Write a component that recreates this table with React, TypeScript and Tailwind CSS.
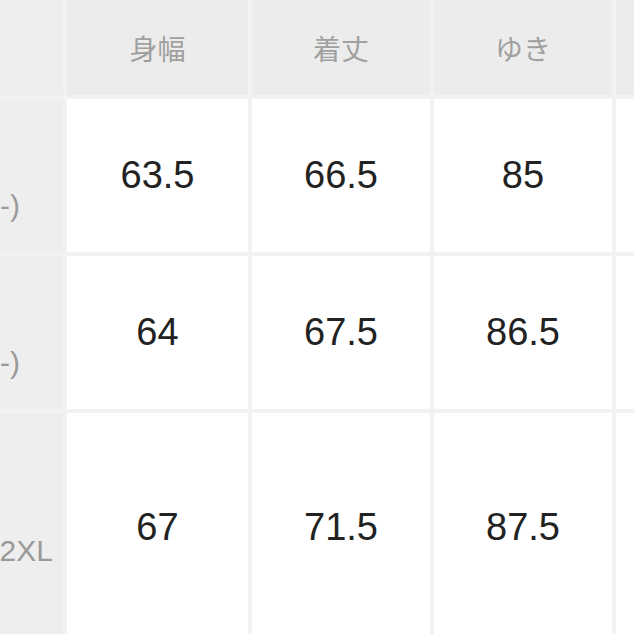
import React from "react";

const headers = ["身幅", "着丈", "ゆき", ""];

interface SizeRow {
    label: string;
    height: string;
    shift: string;
    pad: string;
    values: string[];
}

const rows: SizeRow[] = [
    { label: "-)", height: "h-[153px]", shift: "pt-[60px]", pad: "pr-[43px]", values: ["63.5", "66.5", "85", ""] },
    { label: "-)", height: "h-[153px]", shift: "pt-[60px]", pad: "pr-[43px]", values: ["64", "67.5", "86.5", ""] },
    { label: "2XL", height: "h-[228px]", shift: "pt-[46px]", pad: "pr-[10px]", values: ["67", "71.5", "87.5", ""] },
];

export default function App() {
    return (
        <div className="w-[634px] h-[634px] overflow-hidden bg-[#f2f2f2]">
            <div className="grid grid-cols-[63px_181px_178px_178px_181px] gap-[4px] bg-[#f2f2f2]">
                {/* header row */}
                <div className="h-[95px] bg-[#eeeeee]" />
                {headers.map((h, i) => (
                    <div
                        key={i}
                        className="h-[95px] bg-[#ececec] flex items-center justify-center text-[28px] text-[#a0a0a0] font-['Noto_Sans_CJK_JP',sans-serif]"
                    >
                        {h}
                    </div>
                ))}

                {rows.map((row, r) => (
                    <React.Fragment key={r}>
                        <div
                            className={`${row.height} ${row.shift} ${row.pad} bg-[#eeeeee] flex items-center justify-end`}
                        >
                            <span className="whitespace-nowrap text-[30px] text-[#9a9a9a] font-['Liberation_Sans',sans-serif]">
                                {row.label}
                            </span>
                        </div>
                        {row.values.map((v, i) => (
                            <div
                                key={i}
                                className={`${row.height} bg-white flex items-center justify-center text-[38px] text-[#222222] font-['Liberation_Sans',sans-serif]`}
                            >
                                {v}
                            </div>
                        ))}
                    </React.Fragment>
                ))}
            </div>
        </div>
    );
}
